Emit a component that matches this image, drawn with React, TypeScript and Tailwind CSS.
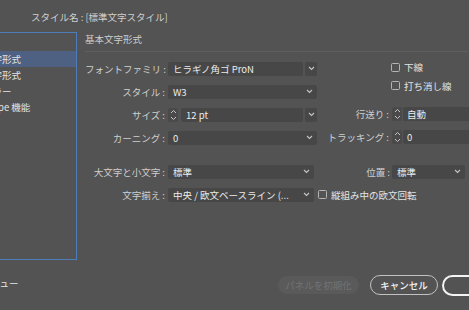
function Chevron() {
  return (
    <svg width="7" height="5" viewBox="0 0 7 5" className="shrink-0">
      <polyline points="1,1 3.5,3.5 6,1" fill="none" stroke="#c4c4c4" strokeWidth="1.1" />
    </svg>
  );
}

function Stepper() {
  return (
    <div className="flex h-[14px] w-[10px] shrink-0 items-center justify-center rounded-[2px] bg-[#4a4a4a]">
      <svg width="7" height="12" viewBox="0 0 7 12">
        <polyline points="1,4 3.5,1.5 6,4" fill="none" stroke="#c4c4c4" strokeWidth="1" />
        <polyline points="1,8 3.5,10.5 6,8" fill="none" stroke="#c4c4c4" strokeWidth="1" />
      </svg>
    </div>
  );
}

function Box({ value, className }: { value: string; className: string }) {
  return (
    <div className={`flex h-[14px] shrink-0 items-center justify-between rounded-[2px] bg-[#474747] pl-[5px] pr-[4px] text-[#ececec] ${className}`}>
      <span className="whitespace-nowrap">{value}</span>
      <Chevron />
    </div>
  );
}

function ComboBox({ value, className }: { value: string; className: string }) {
  return (
    <div className="flex shrink-0 items-center gap-[2px]">
      <div className={`flex h-[14px] items-center rounded-[2px] bg-[#474747] pl-[5px] text-[#ececec] ${className}`}>
        <span className="whitespace-nowrap">{value}</span>
      </div>
      <div className="flex h-[14px] w-[12px] items-center justify-center rounded-[2px] bg-[#474747]">
        <Chevron />
      </div>
    </div>
  );
}

function Check({ label }: { label: string }) {
  return (
    <div className="flex items-center gap-[4px]">
      <div className="h-[9px] w-[9px] shrink-0 rounded-[1.5px] border border-[#b4b4b4]" />
      <span className="whitespace-nowrap text-[#e4e4e4]">{label}</span>
    </div>
  );
}

function Label({ text, w }: { text: string; w: string }) {
  return <div className={`shrink-0 whitespace-nowrap text-right text-[#cfcfcf] ${w}`}>{text}</div>;
}

function Row({ children }: { children: React.ReactNode }) {
  return <div className="flex h-[23px] items-center">{children}</div>;
}

const sideItems = ["一般", "基本文字形式", "詳細文字形式", "文字カラー", "OpenType 機能"];

export default function App() {
  return (
    <div className="flex h-[310px] w-[469px] flex-col overflow-hidden bg-[#535353] font-['Noto_Sans_CJK_JP','Noto_Sans',sans-serif] text-[9.5px] leading-[14px]">
      <div className="h-[32px] shrink-0 pl-[31px] pt-[10px] text-[#cfcfcf]">スタイル名 : [標準文字スタイル]</div>

      <div className="flex h-[228px] shrink-0">
        <div className="-ml-[45px] h-[228px] w-[122px] shrink-0 border border-[#4f7cba] pt-[2px]">
          {sideItems.map((item, i) => (
            <div
              key={item}
              className={`flex h-[16px] items-center whitespace-nowrap pl-[8px] text-[#e4e4e4] ${i === 1 ? "bg-[#4e6183]" : ""}`}
            >
              {item}
            </div>
          ))}
        </div>

        <div className="ml-[8px] flex w-[400px] shrink-0 flex-col">
          <div className="text-[#cfcfcf]">基本文字形式</div>
          <div className="mt-[5px] h-px w-full bg-[#5e5e5e]" />

          <div className="mt-[5px] flex">
            <div className="flex w-[232px] shrink-0 flex-col">
              <Row>
                <Label text="フォントファミリ :" w="w-[80px]" />
                <div className="ml-[3px]">
                  <ComboBox value="ヒラギノ角ゴ ProN" className="w-[135px]" />
                </div>
              </Row>
              <Row>
                <Label text="スタイル :" w="w-[80px]" />
                <Box value="W3" className="ml-[3px] w-[149px]" />
              </Row>
              <Row>
                <Label text="サイズ :" w="w-[80px]" />
                <div className="ml-[3px]">
                  <Stepper />
                </div>
                <div className="ml-[3px]">
                  <ComboBox value="12 pt" className="w-[122px]" />
                </div>
              </Row>
              <Row>
                <Label text="カーニング :" w="w-[80px]" />
                <Box value="0" className="ml-[3px] w-[149px]" />
              </Row>
            </div>

            <div className="flex flex-col">
              <div className="flex h-[19px] items-center pl-[74px] pt-[1px]">
                <Check label="下線" />
              </div>
              <div className="flex h-[19px] items-center pl-[74px]">
                <Check label="打ち消し線" />
              </div>
              <div className="mt-[7px]">
                <Row>
                  <Label text="行送り :" w="w-[72px]" />
                  <div className="ml-[3px]">
                    <Stepper />
                  </div>
                  <div className="ml-[1px] flex h-[14px] w-[80px] items-center rounded-[2px] bg-[#474747] pl-[4px] text-[#ececec]">自動</div>
                </Row>
                <Row>
                  <Label text="トラッキング :" w="w-[72px]" />
                  <div className="ml-[3px]">
                    <Stepper />
                  </div>
                  <div className="ml-[1px] flex h-[14px] w-[80px] items-center rounded-[2px] bg-[#474747] pl-[4px] text-[#ececec]">0</div>
                </Row>
              </div>
            </div>
          </div>

          <div className="mt-[11px] flex flex-col">
            <Row>
              <Label text="大文字と小文字 :" w="w-[80px]" />
              <Box value="標準" className="ml-[3px] w-[146px]" />
              <Label text="位置 :" w="w-[76px]" />
              <Box value="標準" className="ml-[2px] w-[73px]" />
            </Row>
            <Row>
              <Label text="文字揃え :" w="w-[80px]" />
              <Box value="中央 / 欧文ベースライン (..." className="ml-[3px] w-[146px]" />
              <div className="ml-[4px]">
                <Check label="縦組み中の欧文回転" />
              </div>
            </Row>
          </div>
        </div>
      </div>

      <div className="flex h-[50px] shrink-0 items-center">
        <div className="w-[278px] shrink-0">
          <div className="-ml-[29px] mb-[4px] whitespace-nowrap text-[#e4e4e4]">プレビュー</div>
        </div>
        <div className="flex h-[18px] w-[81px] shrink-0 items-center justify-center rounded-full bg-[#5a5a5a] text-[#737373]">
          パネルを初期化
        </div>
        <div className="ml-[11px] flex h-[20px] w-[68px] shrink-0 items-center justify-center rounded-full border-[1.5px] border-[#c2c2c2] font-medium text-[#f2f2f2]">
          キャンセル
        </div>
        <div className="ml-[4px] flex h-[21px] w-[72px] shrink-0 items-center justify-center rounded-full border-2 border-[#f4f4f4] font-medium text-[#f4f4f4]">
          OK
        </div>
      </div>
    </div>
  );
}
